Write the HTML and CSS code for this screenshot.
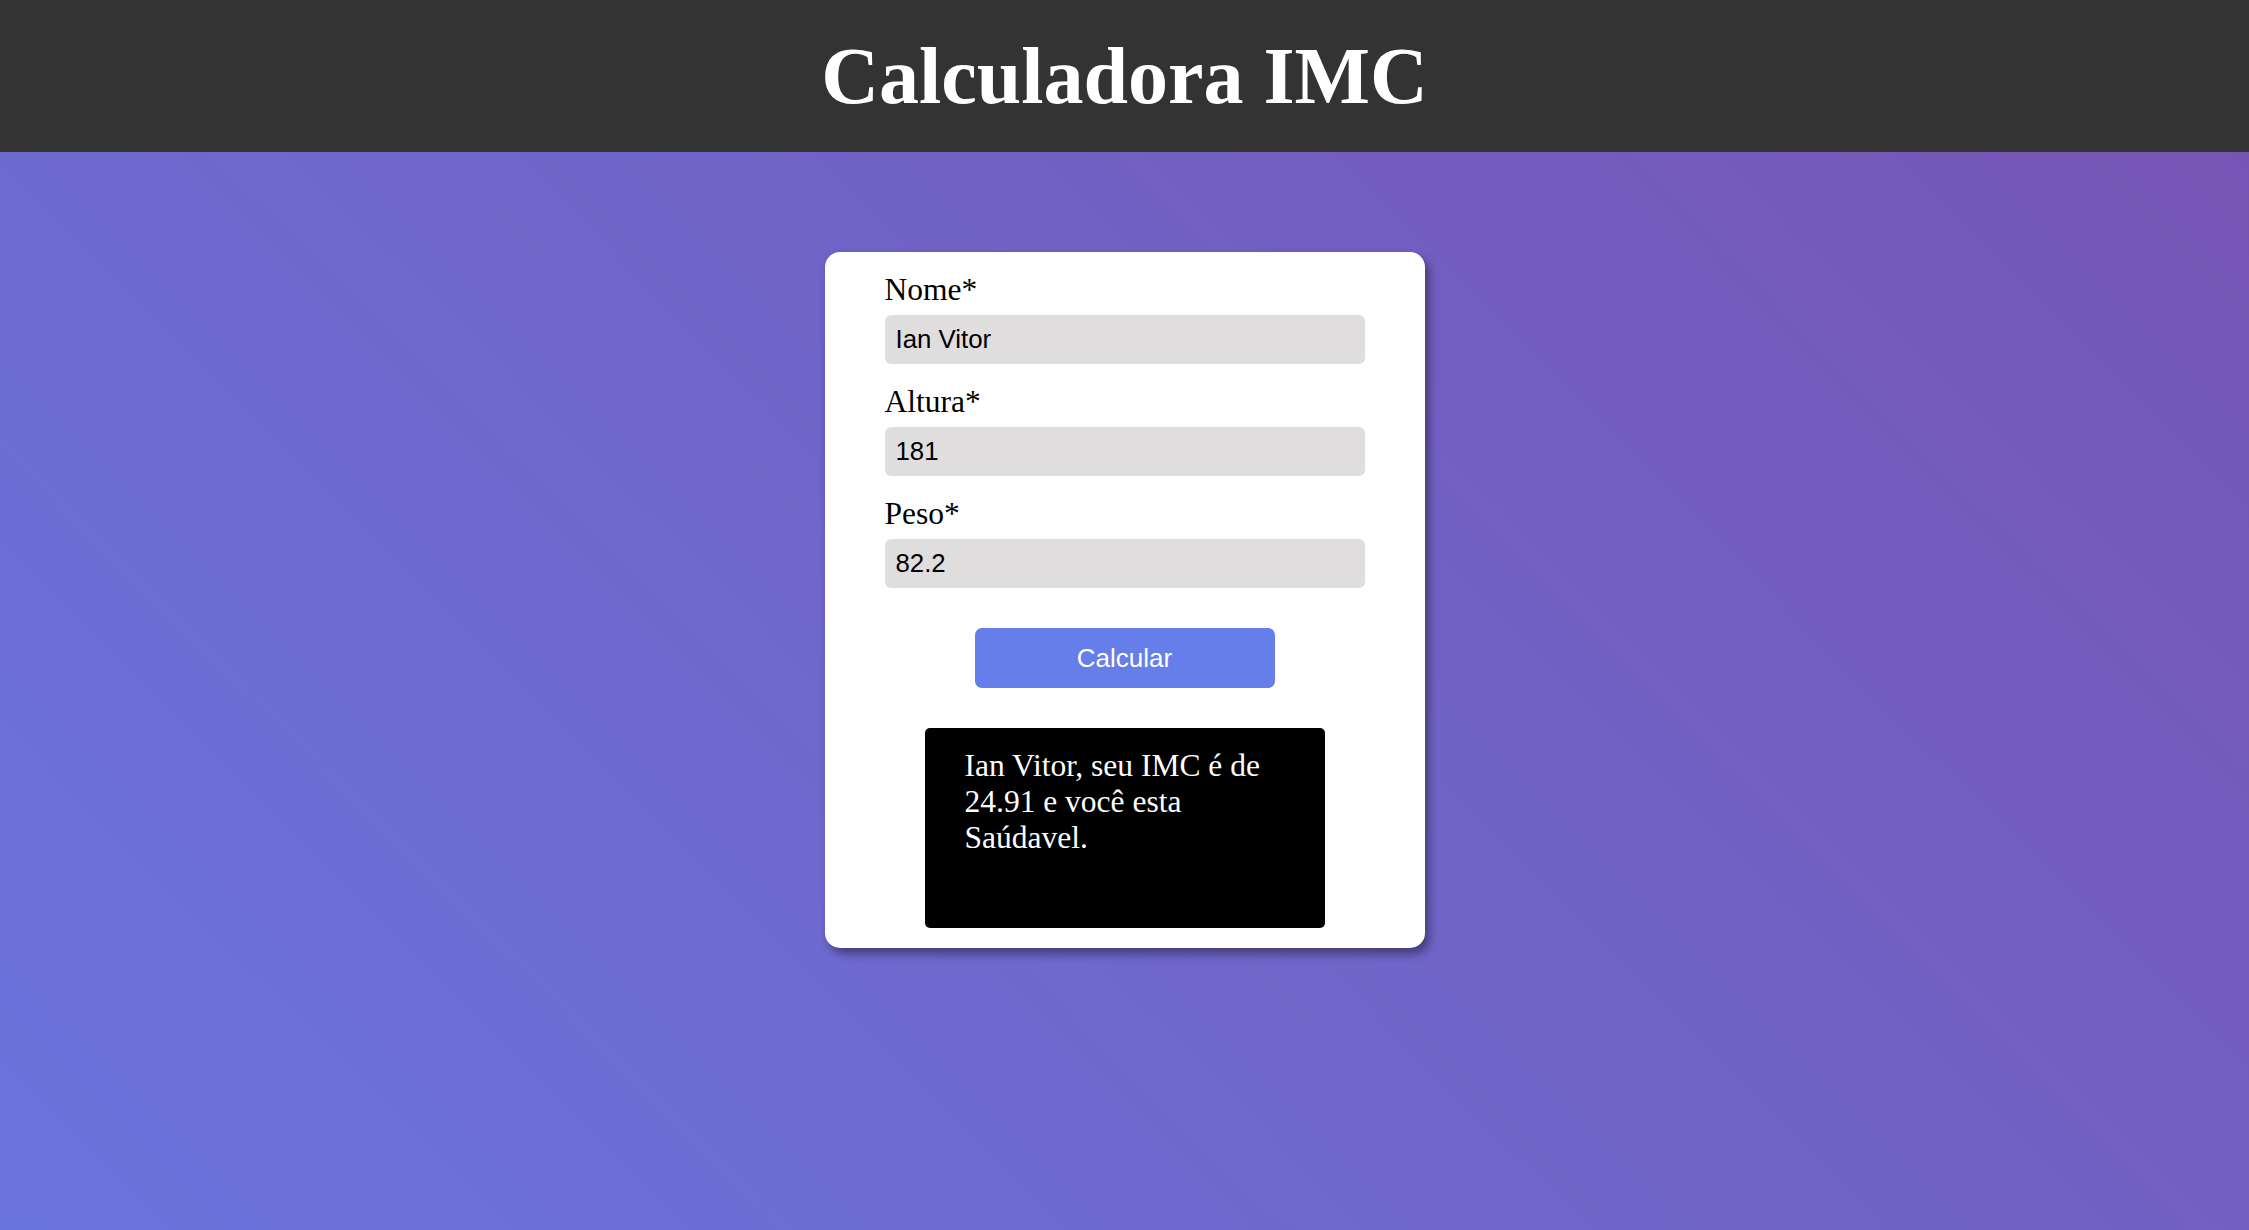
FILE: index.html
```html
<!DOCTYPE html>
<html lang="pt-BR">
<head>
<meta charset="utf-8">
<title>Calculadora IMC</title>
<link rel="stylesheet" href="styles.css">
</head>
<body>
<header class="topbar">
  <h1 class="title">Calculadora IMC</h1>
</header>
<main class="page">
  <form class="card">
    <label class="label" for="nome">Nome*</label>
    <input class="field" id="nome" type="text" value="Ian Vitor">
    <label class="label" for="altura">Altura*</label>
    <input class="field" id="altura" type="text" value="181">
    <label class="label" for="peso">Peso*</label>
    <input class="field field-last" id="peso" type="text" value="82.2">
    <button class="btn" type="button">Calcular</button>
    <div class="result">Ian Vitor, seu IMC é de 24.91 e você esta Saúdavel.</div>
  </form>
</main>
</body>
</html>
```
FILE: styles.css
```css
html, body {
  margin: 0;
  padding: 0;
}
body {
  min-height: 1230px;
  background: linear-gradient(45deg, #6a74dd 0%, #7654b3 100%);
  font-family: "Liberation Serif", "Times New Roman", serif;
}
.topbar {
  height: 152px;
  background: #333333;
  display: flex;
  align-items: center;
  justify-content: center;
}
.title {
  margin: 0;
  color: #ffffff;
  font-family: "Liberation Serif", "Times New Roman", serif;
  font-weight: bold;
  font-size: 80px;
  line-height: 1;
}
.page {
  display: flex;
  justify-content: center;
  padding-top: 100px;
}
.card {
  width: 600px;
  box-sizing: border-box;
  padding: 20px 60px;
  background: #ffffff;
  border-radius: 15px;
  box-shadow: 4px 6px 10px rgba(0, 0, 0, 0.4);
  display: flex;
  flex-direction: column;
}
.label {
  display: block;
  font-family: "Liberation Serif", "Times New Roman", serif;
  font-size: 31.5px;
  color: #000000;
  margin-bottom: 7px;
}
.field {
  display: block;
  width: 100%;
  height: 49px;
  box-sizing: border-box;
  border: none;
  outline: none;
  background: #dfdddd;
  border-radius: 6px;
  padding: 0 11px;
  font-family: "Liberation Sans", Arial, sans-serif;
  font-size: 25.8px;
  color: #000000;
  margin: 0 0 20px 0;
}
.field-last {
  margin-bottom: 40px;
}
.btn {
  display: block;
  align-self: center;
  width: 300px;
  height: 60px;
  border: none;
  border-radius: 7px;
  background: #667eea;
  color: #ffffff;
  font-family: "Liberation Sans", Arial, sans-serif;
  font-size: 26px;
}
.result {
  align-self: center;
  margin-top: 40px;
  width: 400px;
  height: 200px;
  box-sizing: border-box;
  padding: 20px 40px;
  background: #000000;
  color: #ffffff;
  border-radius: 5px;
  font-family: "Liberation Serif", "Times New Roman", serif;
  font-size: 31.5px;
}
```
